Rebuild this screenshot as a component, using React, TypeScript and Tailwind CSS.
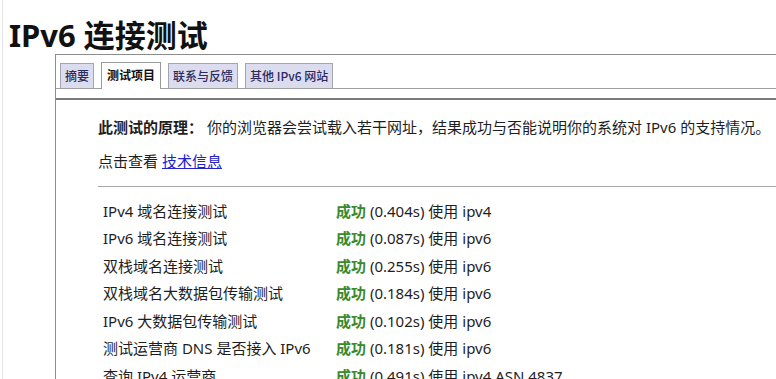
import React from "react";

const rows: { label: string; time: string; extra: string }[] = [
  { label: "IPv4 域名连接测试", time: "(0.404s)", extra: "使用 ipv4" },
  { label: "IPv6 域名连接测试", time: "(0.087s)", extra: "使用 ipv6" },
  { label: "双栈域名连接测试", time: "(0.255s)", extra: "使用 ipv6" },
  { label: "双栈域名大数据包传输测试", time: "(0.184s)", extra: "使用 ipv6" },
  { label: "IPv6 大数据包传输测试", time: "(0.102s)", extra: "使用 ipv6" },
  { label: "测试运营商 DNS 是否接入 IPv6", time: "(0.181s)", extra: "使用 ipv6" },
  { label: "查询 IPv4 运营商", time: "(0.491s)", extra: "使用 ipv4 ASN 4837" },
];

const tabs = [
  { label: "摘要", active: false },
  { label: "测试项目", active: true },
  { label: "联系与反馈", active: false },
  { label: "其他 IPv6 网站", active: false },
];

export default function App() {
  return (
    <div
      className="h-[379px] w-[776px] overflow-hidden bg-white pl-[2px] text-[#1e1e1e]"
      style={{ fontFamily: '"Noto Sans", "Noto Sans CJK SC", sans-serif' }}
    >
      <div className="h-full border-l border-[#e4e4e4]">
        <h1 className="pl-[6px] pt-[16px] text-[31px] font-bold leading-[38px] text-[#111]">
          IPv6 连接测试
        </h1>
        <div className="ml-[52px] border-l border-t border-[#8c8c8c]">
          <div className="flex items-end gap-[7px] border-b border-[#a0a0a0] pl-[4px] pt-[7px]">
            {tabs.map((t) =>
              t.active ? (
                <div
                  key={t.label}
                  className="-mb-px h-[27px] border border-b-0 border-[#9a9a9a] bg-white px-[5px] text-[12px] font-bold leading-[24px] text-[#111]"
                  style={{ fontFamily: '"Noto Sans CJK SC", sans-serif' }}
                >
                  {t.label}
                </div>
              ) : (
                <div
                  key={t.label}
                  className="h-[25px] border border-b-0 border-[#a4a4b4] bg-[#dcdcef] px-[4px] text-[12px] font-medium leading-[23px] text-[#2b2b5e]"
                  style={{ fontFamily: '"Noto Sans CJK SC", sans-serif' }}
                >
                  {t.label}
                </div>
              )
            )}
          </div>
          <div className="h-[11px] border-b-2 border-[#7a7a7a]" />
          <div className="pl-[42px] pt-[14px] text-[15px]">
            <p className="leading-[26px]">
              <b className="font-bold">此测试的原理：</b>
              <span className="ml-[4px]">
                你的浏览器会尝试载入若干网址，结果成功与否能说明你的系统对 IPv6 的支持情况。
              </span>
            </p>
            <p className="mt-[8px] leading-[26px]">
              点击查看 <a className="text-[#2222cc] underline" href="#">技术信息</a>
            </p>
            <div className="mt-[12px] border-t border-[#a8a8a8]" />
            <div className="mt-[10px] pl-[5px]">
              {rows.map((r) => (
                <div key={r.label} className="flex h-[27.5px] items-center">
                  <div className="w-[233px] whitespace-nowrap">{r.label}</div>
                  <div className="whitespace-nowrap">
                    <span className="font-bold text-[#3a8a2c]">成功</span> {r.time} {r.extra}
                  </div>
                </div>
              ))}
            </div>
          </div>
        </div>
      </div>
    </div>
  );
}
